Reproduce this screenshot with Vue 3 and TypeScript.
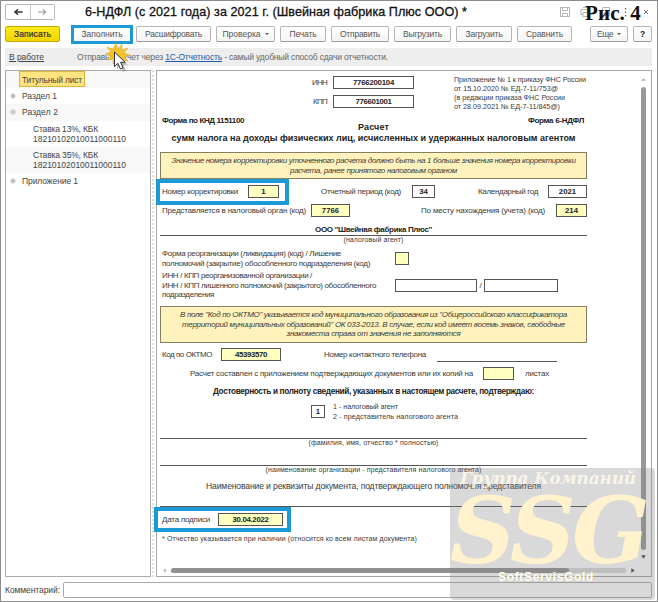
<template>
  <div class="window">
    <header class="titlebar">
      <div class="nav">
        <svg class="nav-half" viewBox="0 0 24 15"><path d="M8.5 7.5H17M12 4.6L8.6 7.5L12 10.4" stroke="#333" stroke-width="1.5" fill="none" /></svg>
        <svg class="nav-half" viewBox="0 0 24 15"><path d="M7 7.5H15.5M12.2 4.8L15.4 7.5L12.2 10.2" stroke="#999" stroke-width="1.1" fill="none" /></svg>
      </div>
      <h1 class="title"><span v-fit="382">6-НДФЛ (с 2021 года) за 2021 г. (Швейная фабрика Плюс ООО) *</span></h1>
      <svg class="title-icons" viewBox="0 0 92 14">
        <g fill="none" stroke="#b5b5b5" stroke-width="1">
          <path d="M.5 2.5h9v9h-9zM2.5 2.5v3h5v-3M2.5 11.500v-3h5v3" />
          <path d="M23 9.500h-2v-5h8v5h-2M23 2.500h5M23 7.500h5v4h-5z" />
          <path d="M42.500 2.500h7v8h-7z" />
        </g>
        <path d="M65.500 3v1.500M65.500 6.500v1.500M65.500 10v1.500" stroke="#666" stroke-width="1.300" />
        <path d="M84 5l4 4M88 5l-4 4" stroke="#666" stroke-width=".9" />
      </svg>
      <span class="figure"><span v-fit="56">Рис. 4</span></span>
    </header>

    <div class="toolbar">
      <button v-for="b in buttons" :key="b.label" class="btn" :class="b.kind">
        <span v-fit="b.text">{{ b.label }}</span>
        <i v-if="b.menu" class="caret"></i>
      </button>
      <svg class="pointer" viewBox="0 0 28 30">
        <path d="M12 0l2 6 4-5 0 6 6-2-4 5 6 2-6 2 4 4-6-1-1 5-4-4-4 3 0-5-6 1 4-4-6-2 6-2-4-5 6 2z" fill="#f4c32c" stroke="#dda51c" stroke-width=".5" />
        <path d="M11 10v14l3.400-3.200 2.600 6 3-1.300-2.700-5.700h4.500z" fill="#777" opacity=".5" transform="translate(2 2)" />
        <path d="M10.500 9v14.500l3.400-3.200 2.500 5.700 2.700-1.200-2.500-5.500h4.600z" fill="#fff" stroke="#333" stroke-width="1" />
      </svg>
    </div>

    <div class="infobar">
      <span class="status"><span v-fit="35" class="status-text">В работе</span></span>
      <span class="info"><span v-fit="311">Отправьте отчет через <a class="link">1С-Отчетность</a> - самый удобный способ сдачи отчетности.</span></span>
    </div>

    <main class="work">
      <nav class="tree">
        <div v-for="(node, i) in tree" :key="i" class="node" :class="{ odd: i % 2 === 0, child: node.child, tall: node.lines.length > 1 }">
          <span class="mark">
            <svg v-if="node.mark" viewBox="0 0 6 6"><circle cx="3" cy="3" r="2.200" fill="none" stroke="#aaa" stroke-width=".7" /><path :d="node.mark === 'plus' ? 'M1.500 3h3M3 1.500v3' : 'M1.500 3h3'" stroke="#777" stroke-width=".7" /></svg>
          </span>
          <span class="node-text" :class="{ current: i === 0 }">
            <span v-for="line in node.lines" :key="line.text" class="line"><span v-fit="line.width">{{ line.text }}</span></span>
          </span>
        </div>
      </nav>
      <div class="splitter"></div>

      <section class="doc">
        <div class="form">
          <div class="head">
            <div class="codes">
              <span class="code-label"><span v-fit="15">ИНН</span></span><span class="field"><span v-fit="41">7766200104</span></span>
              <span class="code-label"><span v-fit="14">КПП</span></span><span class="field"><span v-fit="36">776601001</span></span>
            </div>
            <div class="appendix">
              <span v-for="a in appendix" :key="a.text" class="line"><span v-fit="a.width">{{ a.text }}</span></span>
            </div>
          </div>
          <div class="row knd"><span v-fit="82">Форма по КНД 1151100</span><span v-fit="56">Форма 6-НДФЛ</span></div>
          <div class="row heading"><span v-fit="31">Расчет</span></div>
          <div class="row subject"><span v-fit="404">сумм налога на доходы физических лиц, исчисленных и удержанных налоговым агентом</span></div>

          <div class="note">
            <span class="line"><span v-fit="404">Значение номера корректировки уточненного расчета должно быть на 1 больше значения номера корректировки</span></span>
            <span class="line"><span v-fit="167">расчета, ранее принятого налоговым органом</span></span>
          </div>

          <div class="row period">
            <span><span v-fit="76">Номер корректировки</span></span>
            <span class="field yellow">1</span>
            <span><span v-fit="80">Отчетный период (код)</span></span>
            <span class="field">34</span>
            <span><span v-fit="60">Календарный год</span></span>
            <span class="field">2021</span>
            <i class="frame frame-number"></i>
          </div>
          <div class="row office">
            <span><span v-fit="144">Представляется в налоговый орган (код)</span></span>
            <span class="field yellow">7766</span>
            <span><span v-fit="124">По месту нахождения (учета) (код)</span></span>
            <span class="field yellow">214</span>
          </div>

          <div class="row org"><span v-fit="117">ООО "Швейная фабрика Плюс"</span></div>
          <div class="row caption"><span v-fit="60">(налоговый агент)</span></div>

          <div class="row reorg">
            <div class="para">
              <span class="line"><span v-fit="179">Форма реорганизации (ликвидация) (код) / Лишение</span></span>
              <span class="line"><span v-fit="208">полномочий (закрытие) обособленного подразделения (код)</span></span>
            </div>
            <span class="field yellow square"></span>
          </div>
          <div class="row reorg-inn">
            <div class="para">
              <span class="line"><span v-fit="150">ИНН / КПП реорганизованной организации /</span></span>
              <span class="line"><span v-fit="214">ИНН / КПП лишенного полномочий (закрытого) обособленного</span></span>
              <span class="line"><span v-fit="52">подразделения</span></span>
            </div>
            <span class="field"></span><span class="slash">/</span><span class="field"></span>
          </div>

          <div class="note oktmo-note">
            <span class="line"><span v-fit="387">В поле "Код по ОКТМО" указывается код муниципального образования из "Общероссийского классификатора</span></span>
            <span class="line"><span v-fit="383">территорий муниципальных образований" ОК 033-2013. В случае, если код имеет восемь знаков, свободные</span></span>
            <span class="line"><span v-fit="174">знакоместа справа от значения не заполняются</span></span>
          </div>

          <div class="row oktmo">
            <span><span v-fit="50">Код по ОКТМО</span></span>
            <span class="field yellow"><span v-fit="32">45393570</span></span>
            <span><span v-fit="102">Номер контактного телефона</span></span>
            <span class="blank"></span>
          </div>
          <div class="row copies">
            <span><span v-fit="283">Расчет составлен с приложением подтверждающих документов или их копий на</span></span>
            <span class="field yellow"></span>
            <span><span v-fit="24">листах</span></span>
          </div>
          <div class="row confirm"><span v-fit="321">Достоверность и полноту сведений, указанных в настоящем расчете, подтверждаю:</span></div>
          <div class="row signer">
            <span class="field square">1</span>
            <div>
              <span class="line"><span v-fit="65">1 - налоговый агент</span></span>
              <span class="line"><span v-fit="125">2 - представитель налогового агента</span></span>
            </div>
          </div>
          <div class="rule fio"></div>
          <div class="row caption"><span v-fit="130">(фамилия, имя, отчество * полностью)</span></div>
          <div class="rule rep"></div>
          <div class="row caption"><span v-fit="216">(наименование организации - представителя налогового агента)</span></div>
          <div class="row authority"><span v-fit="335">Наименование и реквизиты документа, подтверждающего полномочия представителя</span></div>
          <div class="rule thin"></div>
          <div class="row date">
            <span><span v-fit="48">Дата подписи</span></span>
            <span class="field yellow"><span v-fit="36">30.04.2022</span></span>
            <i class="frame frame-date"></i>
          </div>
          <div class="row footnote"><span v-fit="255">* Отчество указывается при наличии (относится ко всем листам документа)</span></div>
        </div>

        <div class="vbar">
          <svg viewBox="0 0 6 6"><path d="M1 4L3 2L5 4z" fill="#aaa" /></svg>
          <span class="vthumb"></span>
          <svg viewBox="0 0 6 6"><path d="M1 2L3 5L5 2z" fill="#444" /></svg>
        </div>
        <div class="hbar">
          <svg viewBox="0 0 6 6"><path d="M4 1L2 3L4 5z" fill="#aaa" /></svg>
          <span class="htrack"><i class="hthumb"></i></span>
          <svg viewBox="0 0 6 6"><path d="M2 1L5 3L2 5z" fill="#444" /></svg>
        </div>
      </section>
    </main>

    <footer class="comment">
      <label class="comment-label"><span v-fit="55">Комментарий:</span></label>
      <div class="comment-input"></div>
    </footer>

    <div class="watermark">
      <div class="wm-top"><span v-fit="176">Группа Компаний</span></div>
      <div class="wm-main"><span v-fit="196">SSG</span></div>
      <div class="wm-sub"><span v-fit="96">SoftServisGold</span></div>
    </div>
  </div>
</template>

<script setup lang="ts">
import type { Directive } from 'vue';

interface ToolButton {
  label: string;
  text: number;
  kind: string;
  menu?: boolean;
}

interface Line {
  text: string;
  width: number;
}

interface TreeNode {
  lines: Line[];
  mark?: 'plus' | 'minus';
  child?: boolean;
}

// spreads the letters so that a caption keeps its printed width
const vFit: Directive<HTMLElement, number> = {
  mounted(el, { value }) {
    el.style.display = 'inline-block';
    el.style.whiteSpace = 'pre';
    const count = (el.textContent ?? '').length;
    el.style.letterSpacing = `${(value - el.getBoundingClientRect().width) / count}px`;
  },
};

const buttons: ToolButton[] = [
  { label: 'Записать', text: 37, kind: 'save' },
  { label: 'Заполнить', text: 41, kind: 'fill' },
  { label: 'Расшифровать', text: 57, kind: 'decode' },
  { label: 'Проверка', text: 38, kind: 'check', menu: true },
  { label: 'Печать', text: 27, kind: 'print' },
  { label: 'Отправить', text: 40, kind: 'send' },
  { label: 'Выгрузить', text: 39, kind: 'export' },
  { label: 'Загрузить', text: 37, kind: 'import' },
  { label: 'Сравнить', text: 37, kind: 'compare' },
  { label: 'Еще', text: 16, kind: 'more', menu: true },
  { label: '?', text: 5, kind: 'help' },
];

const tree: TreeNode[] = [
  { lines: [{ text: 'Титульный лист', width: 60 }] },
  { lines: [{ text: 'Раздел 1', width: 35 }], mark: 'plus' },
  { lines: [{ text: 'Раздел 2', width: 36 }], mark: 'minus' },
  { lines: [{ text: 'Ставка 13%, КБК', width: 65 }, { text: '18210102010011000110', width: 93 }], child: true },
  { lines: [{ text: 'Ставка 35%, КБК', width: 65 }, { text: '18210102010011000110', width: 93 }], child: true },
  { lines: [{ text: 'Приложение 1', width: 56 }], mark: 'plus' },
];

const appendix: Line[] = [
  { text: 'Приложение № 1 к приказу ФНС России', width: 132 },
  { text: 'от 15.10.2020 № ЕД-7-11/753@', width: 104 },
  { text: '(в редакции приказа ФНС России', width: 111 },
  { text: 'от 28.09.2021 № ЕД-7-11/845@)', width: 106 },
];
</script>

<style>
body {
  margin: 0;
  background: #fff;
}
</style>

<style scoped>
* {
  box-sizing: border-box;
}

.window {
  position: relative;
  display: flex;
  flex-direction: column;
  width: 658px;
  height: 602px;
  overflow: hidden;
  border: 1px solid #8c8c8c;
  background: #fff;
  color: #444;
  font-family: "Liberation Sans", Arial, sans-serif;
  font-size: 8.5px;
}

.line {
  display: block;
}

.titlebar {
  position: relative;
  display: flex;
  align-items: center;
  height: 21px;
  padding-left: 4px;
}

.nav {
  display: flex;
  width: 50px;
  height: 16px;
  border: 1px solid #b8b8b8;
  border-radius: 2px;
}

.nav-half {
  width: 24px;
  height: 14px;
}

.nav-half + .nav-half {
  border-left: 1px solid #ccc;
}

.title {
  width: 480px;
  margin: 0 0 0 30px;
  color: #111;
  font-size: 12.6px;
  font-weight: normal;
  line-height: 20px;
  -webkit-text-stroke: 0.3px #111;
}

.title-icons {
  flex: none;
  width: 92px;
  height: 14px;
  margin-left: -5px;
}

.figure {
  position: absolute;
  left: 584px;
  top: -1px;
  color: #111;
  font: bold 21px/26px "Liberation Serif", serif;
}

.toolbar {
  position: relative;
  display: flex;
  align-items: center;
  height: 24px;
  padding: 0 4px;
}

.btn {
  display: flex;
  flex: none;
  align-items: center;
  justify-content: center;
  height: 16px;
  margin: 0 5px 0 0;
  padding: 0;
  border: 1px solid #b5b5b5;
  border-bottom-color: #999;
  border-radius: 2px;
  background: linear-gradient(#fff, #f4f4f4);
  color: #555;
  font: 8.5px "Liberation Sans", Arial, sans-serif;
}

.btn.save {
  width: 55px;
  margin-right: 11px;
  border-color: #c4a900;
  background: linear-gradient(#ffea1c, #f0d400);
  color: #333;
  -webkit-text-stroke: 0.2px #333;
}

.btn.fill {
  width: 62px;
  height: 19px;
  margin-right: 3px;
  border: 3px solid #1c9ad6;
  border-radius: 0;
}

.decode { width: 75px; }
.check { width: 59px; }
.print { width: 46px; }
.send { width: 58px; }
.export { width: 57px; }
.import { width: 56px; }
.compare { width: 55px; }
.btn.more { width: 38px; margin-left: 13px; }

.btn.help {
  width: 19px;
  margin-right: 0;
  color: #222;
  font-weight: bold;
}

.caret {
  margin-left: 4px;
  border: 2px solid transparent;
  border-top-color: #555;
  border-bottom: 0;
}

.pointer {
  position: absolute;
  z-index: 2;
  left: 103px;
  top: 21px;
  width: 28px;
  height: 30px;
}

.infobar {
  display: flex;
  align-items: center;
  height: 18px;
  margin: 2px 5px 0 4px;
  padding-left: 4px;
  background: #eee;
  color: #666;
}

.status {
  width: 68px;
  color: #444;
}

.status-text {
  text-decoration: underline;
}

.link {
  color: #1f5ba8;
  text-decoration: underline;
}

.work {
  display: flex;
  height: 507px;
  margin: 4px 5px 0 4px;
}

.tree {
  width: 146px;
  border: 1px solid #aaa;
}

.node {
  display: flex;
  align-items: center;
  height: 16.5px;
  line-height: 10px;
}

.node.odd {
  background: #f8f8f8;
}

.node.tall {
  height: 26.3px;
}

.mark {
  display: flex;
  width: 14px;
  padding-left: 4px;
}

.mark svg {
  width: 6px;
  height: 6px;
}

.node-text {
  padding-left: 2px;
}

.child .node-text {
  padding-left: 13px;
}

.node-text.current {
  height: 16px;
  margin-left: -1px;
  padding: 3px 2px 0;
  border: 1px solid #d8b53c;
  background: #ffe480;
}

.splitter {
  width: 2px;
  margin: 0 2px 0 1px;
  border-left: 2px dotted #ddd;
}

.doc {
  display: grid;
  grid-template-columns: 1fr 15px;
  grid-template-rows: 1fr 15px;
  width: 496px;
  border: 1px solid #a5a5a5;
}

.form {
  width: 430px;
  height: 490px;
  padding: 1px 0 0 3px;
  color: #3a3a3a;
  font-size: 8px;
  line-height: 9.4px;
  white-space: nowrap;
}

.row {
  display: flex;
  flex: none;
  align-items: center;
}

.field {
  display: flex;
  flex: none;
  align-items: center;
  justify-content: center;
  height: 13px;
  border: 1px solid #555;
  background: #fff;
  color: #222;
  font-weight: bold;
  font-size: 7.8px;
}

.field.yellow {
  background: #ffffc0;
}

.head {
  display: flex;
  height: 44px;
  padding-top: 4px;
}

.codes {
  display: grid;
  grid-template-columns: 167px 81px;
  grid-auto-rows: 13px;
  gap: 6px;
  align-items: center;
}

.code-label {
  text-align: right;
}

.appendix {
  margin-left: 40px;
  font-size: 7.2px;
  line-height: 8.9px;
}

.knd {
  justify-content: space-between;
  width: 424px;
  height: 9px;
  padding-left: 2px;
  color: #222;
  font-weight: bold;
}

.heading,
.subject,
.confirm {
  justify-content: center;
  color: #222;
  font-size: 9px;
  font-weight: bold;
}

.heading {
  height: 5px;
}

.subject {
  height: 18px;
}

.note {
  display: flex;
  flex-direction: column;
  align-items: center;
  justify-content: center;
  width: 427px;
  height: 27px;
  margin-top: 4px;
  border: 1px solid #85805e;
  background: #fff2bd;
  font-style: italic;
}

.period {
  position: relative;
  display: grid;
  grid-template-columns: 86px 31px 42px 91px 23px 43px 70px 39px;
  height: 19px;
  margin-top: 3px;
  padding-left: 2px;
}

.period > :nth-child(3) { grid-column: 4; }
.period > :nth-child(5) { grid-column: 7; }
.period > :nth-child(4) { grid-column: 5; }
.period > :nth-child(6) { grid-column: 8; }

.frame {
  position: absolute;
  border: 4px solid #1c9ad6;
}

.frame-number {
  left: -4px;
  top: -3px;
  width: 133px;
  height: 26px;
}

.office {
  display: grid;
  grid-template-columns: 149px 39px 71px 135px 31px;
  height: 19px;
  padding-left: 2px;
}

.office > :nth-child(3) { grid-column: 4; }
.office > :nth-child(4) { grid-column: 5; }

.org {
  justify-content: center;
  width: 427px;
  height: 12px;
  margin-top: 4px;
  border-bottom: 1px solid #555;
  color: #222;
  font-weight: bold;
}

.caption {
  justify-content: center;
  width: 427px;
  height: 8px;
  font-size: 7px;
}

.reorg {
  height: 19px;
  margin-top: 5px;
}

.para {
  width: 235px;
  padding-left: 2px;
}

.field.square {
  width: 14px;
}

.reorg-inn {
  height: 29px;
  margin-top: 3px;
}

.reorg-inn .field {
  width: 82px;
}

.reorg-inn .field:last-child {
  width: 74px;
}

.slash {
  width: 7px;
  text-align: center;
}

.oktmo-note {
  height: 37px;
  margin-top: 6px;
}

.oktmo {
  display: grid;
  grid-template-columns: 59px 60px 43px 113px 120px;
  height: 19px;
  margin-top: 2px;
  padding-left: 2px;
}

.oktmo > :nth-child(3) { grid-column: 4; }

.blank {
  grid-column: 5;
  height: 14px;
  border-bottom: 1px solid #555;
}

.copies {
  height: 19px;
  padding-left: 30px;
}

.copies .field {
  width: 31px;
  margin: 0 11px 0 10px;
}

.confirm {
  width: 427px;
  height: 17px;
  font-size: 8.2px;
}

.signer {
  height: 22px;
  padding: 1px 0 0 151px;
  font-size: 7.2px;
}

.signer .field {
  margin-right: 8px;
}

.rule {
  width: 427px;
  border-bottom: 1px solid #555;
}

.rule.fio { height: 17px; }
.rule.rep { height: 19px; }
.rule.thin { height: 7px; }

.authority {
  justify-content: center;
  width: 427px;
  height: 26px;
  font-size: 8.6px;
}

.date {
  position: relative;
  height: 25px;
  padding-left: 2px;
}

.date .field {
  width: 65px;
  margin-left: 8px;
}

.frame-date {
  left: -6px;
  top: 0;
  width: 137px;
  height: 25px;
}

.footnote {
  height: 14px;
  padding-left: 2px;
  font-size: 7px;
}

.vbar {
  display: flex;
  flex-direction: column;
  align-items: center;
  justify-content: space-between;
  grid-column: 2;
  padding: 5px 0 1px;
}

.vbar svg,
.hbar svg {
  flex: none;
  width: 7px;
  height: 7px;
}

.vthumb {
  width: 5px;
  height: 463px;
  border-radius: 3px;
  background: #999;
}

.hbar {
  display: flex;
  align-items: center;
  justify-content: space-between;
  grid-row: 2;
  grid-column: 1;
  padding: 3px 0 0 4px;
}

.htrack {
  display: flex;
  width: 455px;
  height: 5px;
  border-radius: 3px;
  background: #d8d8d8;
}

.hthumb {
  width: 398px;
  border-radius: 3px;
  background: #909090;
}

.comment {
  display: flex;
  align-items: center;
  height: 16px;
  margin: 5px 5px 0 4px;
}

.comment-label {
  width: 58px;
}

.comment-input {
  flex: 1;
  height: 16px;
  border: 1px solid #aaa;
  border-radius: 2px;
}

.watermark {
  position: absolute;
  left: 449px;
  top: 467px;
  width: 205px;
  height: 132px;
  border-radius: 4px;
  background: rgba(130, 130, 130, 0.3);
  white-space: nowrap;
}

.wm-top {
  height: 23px;
  padding-left: 10px;
  color: rgba(255, 250, 235, 0.85);
  font: italic bold 17px/21px "DejaVu Serif", serif;
}

.wm-main {
  height: 77px;
  color: #fff2cc;
  font: italic bold 91px/80px "DejaVu Serif", serif;
}

.wm-sub {
  padding-left: 48px;
  color: #fff;
  font-size: 12px;
  font-weight: bold;
  line-height: 18px;
  text-shadow: 0 0 1px #c9b67a;
}
</style>
